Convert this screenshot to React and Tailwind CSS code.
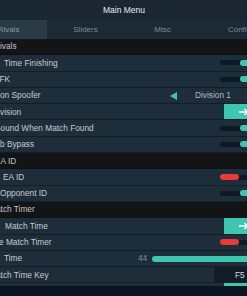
import React from "react";

const font = { fontFamily: '"Liberation Sans", Arial, sans-serif' };

function Toggle({ on }) {
  return (
    <div className="relative w-[40px] h-[6px] mr-[18px] flex items-center">
      <div className="w-full h-[5px] rounded-full bg-[#0f1923]" />
      {on ? (
        <div className="absolute right-[1px] top-0 w-[19px] h-[6px] rounded-full bg-[#3fc6b1]" />
      ) : (
        <div className="absolute left-0 top-0 w-[19px] h-[6px] rounded-full bg-[#e8393b]" />
      )}
    </div>
  );
}

function Arrow() {
  return (
    <div className="w-[36px] h-full mr-[18px] bg-[#3fc6b1] flex items-center pl-[15px]">
      <svg width="10" height="8" viewBox="0 0 10 8" fill="none" stroke="#ffffff" strokeWidth="1.4">
        <path d="M0 4h8.5M5.5 1l3 3-3 3" />
      </svg>
    </div>
  );
}

function Spinner() {
  return (
    <div className="w-[90px] h-full mr-[18px] flex items-center">
      <svg width="7" height="8" viewBox="0 0 7 8">
        <path d="M0 4L7 0v8z" fill="#3fc6b1" />
      </svg>
      <span className="ml-[18px] text-[8.3px] text-[#b3bcc4]">Division 1</span>
      <svg className="ml-auto" width="7" height="8" viewBox="0 0 7 8">
        <path d="M7 4L0 0v8z" fill="#3fc6b1" />
      </svg>
    </div>
  );
}

function Slider({ value }) {
  return (
    <div className="w-[122px] mr-[18px] flex items-center">
      <span className="w-[8px] text-[8.3px] text-[#7f8d98]">{value}</span>
      <div className="ml-[6px] flex-1 h-[6px] rounded-l-full bg-[#3fc6b1]" />
    </div>
  );
}

function Key({ k }) {
  return (
    <div className="w-[46px] h-full mr-[18px] bg-[#131c25] flex items-center pl-[21px]">
      <span className="text-[8.3px] text-[#d6dde2]">{k}</span>
    </div>
  );
}

function Row({ label, ml, children }) {
  return (
    <div className="h-[16.3px] shrink-0 flex items-center bg-[#1e2d3a] border-b border-[#141e27]">
      <span className="text-[8.3px] text-[#c3cbd2] whitespace-nowrap" style={{ marginLeft: 30 + ml }}>
        {label}
      </span>
      <div className="flex-1" />
      <div className="h-full flex items-center">{children}</div>
    </div>
  );
}

function Header({ label, ml }) {
  return (
    <div className="h-[16.3px] shrink-0 flex items-center bg-[#131415] border-b border-[#0e1013]">
      <span className="text-[8.3px] text-[#c0c4c8] whitespace-nowrap" style={{ marginLeft: 30 + ml }}>
        {label}
      </span>
    </div>
  );
}

export default function App() {
  return (
    <div className="w-[247px] h-[296px] overflow-hidden bg-[#0c1420]" style={font}>
      <div className="ml-[-30px] w-[308px] h-[286px] overflow-hidden flex flex-col bg-[#131415]">
        <div className="h-[20px] shrink-0 flex items-center justify-center bg-[#1a2631]">
          <span className="text-[8.5px] text-[#e6eaed]">Main Menu</span>
        </div>
        <div className="h-[19px] shrink-0 flex bg-[#1c2a36]">
          <div className="w-[77px] flex items-center justify-center bg-[#2a3b48] text-[8px] text-[#8797a4]">Rivals</div>
          <div className="w-[77px] flex items-center justify-center text-[8px] text-[#7a8b98]">Sliders</div>
          <div className="w-[77px] flex items-center justify-center text-[8px] text-[#7a8b98]">Misc</div>
          <div className="w-[77px] flex items-center justify-center text-[8px] text-[#7a8b98]">Config</div>
        </div>
        <Header label="Rivals" ml={-6} />
        <Row label="Time Finishing" ml={4}><Toggle on /></Row>
        <Row label="AFK" ml={-6}><Toggle on /></Row>
        <Row label="on Spoofer" ml={0}><Spinner /></Row>
        <Row label="vision" ml={0}><Arrow /></Row>
        <Row label="Sound When Match Found" ml={-5}><Toggle on /></Row>
        <Row label="b Bypass" ml={0}><Toggle on /></Row>
        <Header label="EA ID" ml={-5} />
        <Row label="EA ID" ml={3}><Toggle on={false} /></Row>
        <Row label="Opponent ID" ml={0}><Toggle on /></Row>
        <Header label="atch Timer" ml={-4} />
        <Row label="Match Time" ml={5}><Arrow /></Row>
        <Row label="e Match Timer" ml={-1}><Toggle on={false} /></Row>
        <Row label="Time" ml={4}><Slider value="44" /></Row>
        <Row label="atch Time Key" ml={-4}><Key k="F5" /></Row>
        <Row label="Reset" ml={4}><Arrow /></Row>
      </div>
    </div>
  );
}
